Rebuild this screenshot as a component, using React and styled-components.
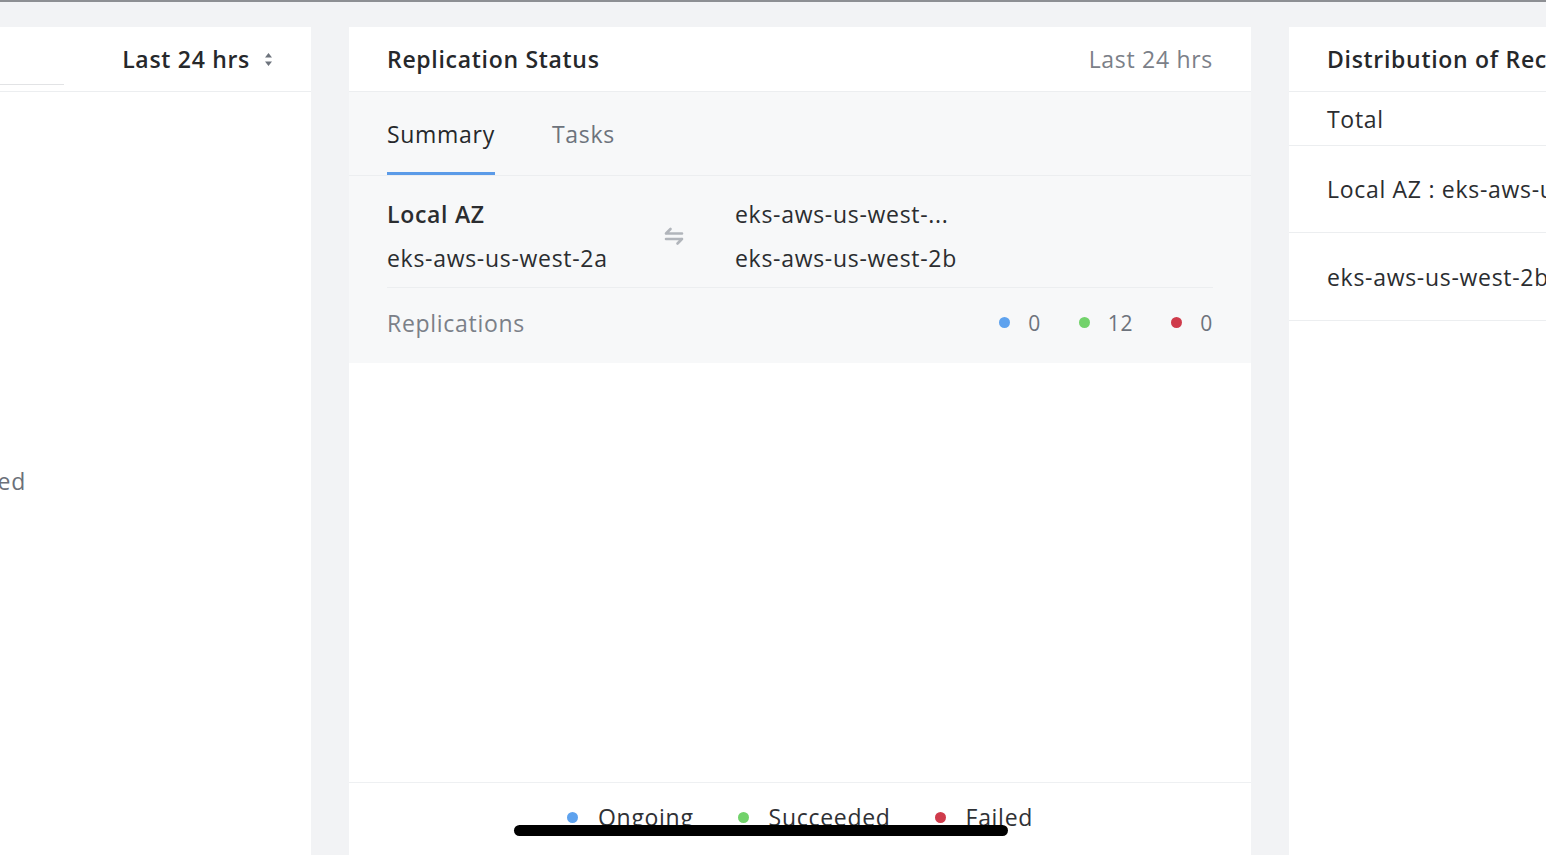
import React from "react";
import styled, { createGlobalStyle } from "styled-components";

const Global = createGlobalStyle`
  html, body {
    margin:0;
    padding:0;
    overflow:hidden;
    background:#f2f3f5;
    font-family:"Open Sans", "Liberation Sans", sans-serif;
    letter-spacing:0.7px;
    color:#2b2d30;
  }
`;

const Page = styled.div`
  width:1546px;
  height:855px;
  position:relative;
  border-top:2px solid #8d8f93;
  box-sizing:border-box;
  overflow:hidden;
`;

const Board = styled.div`
  display:flex;
  gap:38px;
  padding-top:25px;
  margin-left:-89px;
  height:100%;
  box-sizing:border-box;
`;

const Card = styled.section`
  flex:0 0 ${p => p.$w}px;
  background:#fff;
  display:flex;
  flex-direction:column;
  min-width:0;
  overflow:hidden;
`;

const CardHeader = styled.div`
  height:65px;
  flex:0 0 65px;
  display:flex;
  align-items:center;
  justify-content:space-between;
  padding:0 38px;
  border-bottom:1px solid #eceef0;
  box-sizing:border-box;
  white-space:nowrap;
`;

const SearchLine = styled.div`
  align-self:flex-end;
  width:153px;
  margin:0 0 6px -38px;
  border-bottom:1px solid #e2e3e5;
`;

const Title = styled.h2`
  margin:0;
  font-size:23px;
  font-weight:600;
  color:#26282b;
`;

const Range = styled.span`
  font-size:23px;
  color:${p => p.$muted ? "#7b8088" : "#26282b"};
  font-weight:${p => p.$muted ? 400 : 600};
  display:flex;
  align-items:center;
  gap:14px;
`;

const LeftBody = styled.div`
  flex:1;
`;

const LeftLabel = styled.div`
  padding:373px 0 0 0;
  margin-left:-7px;
  font-size:23px;
  color:#6b7079;
`;

const Panel = styled.div`
  background:#f7f8f9;
  padding:0 38px;
`;

const Tabs = styled.div`
  display:flex;
  gap:57px;
  height:83px;
  align-items:stretch;
  border-bottom:1px solid #eceef0;
  margin:0 -38px;
  padding:0 38px;
`;

const Tab = styled.div`
  display:flex;
  align-items:center;
  font-size:23px;
  font-weight:${p => p.$active ? 500 : 400};
  color:${p => p.$active ? "#26282b" : "#6d737c"};
  border-bottom:3px solid ${p => p.$active ? "#5b9be8" : "transparent"};
  padding-top:4px;
  box-sizing:border-box;
`;

const Route = styled.div`
  display:grid;
  grid-template-columns:262px 86px 1fr;
  height:112px;
  align-items:center;
  border-bottom:1px solid #eceef0;
  padding-top:8px;
  box-sizing:border-box;
`;

const ZoneCol = styled.div`
  display:flex;
  flex-direction:column;
  gap:12px;
  font-size:23px;
  white-space:nowrap;
`;

const ZoneName = styled.span`
  font-weight:${p => p.$strong ? 600 : 400};
  color:#2b2d30;
`;

const SwapIcon = styled.div`
  display:flex;
  align-items:center;
  justify-content:flex-start;
  padding-left:15px;
  color:#b1b5bb;
`;

const CountRow = styled.div`
  display:flex;
  align-items:center;
  justify-content:space-between;
  height:75px;
  padding-bottom:6px;
  box-sizing:border-box;
`;

const Muted = styled.span`
  font-size:23px;
  color:#7b8088;
`;

const Counts = styled.div`
  display:flex;
  gap:38px;
`;

const Count = styled.span`
  display:flex;
  align-items:center;
  gap:18px;
  font-size:21px;
  color:#6d737c;
`;

const Dot = styled.i`
  width:11px;
  height:11px;
  border-radius:50%;
  background:${p => p.$c};
  display:inline-block;
`;

const Spacer = styled.div`
  flex:1;
  border-bottom:1px solid #eef0f2;
`;

const Legend = styled.div`
  height:72px;
  flex:0 0 72px;
  display:flex;
  justify-content:center;
  align-items:center;
  gap:44px;
  padding-bottom:4px;
  box-sizing:border-box;
`;

const LegendItem = styled.span`
  display:flex;
  align-items:center;
  gap:20px;
  font-size:23px;
  color:#2f3135;
`;

const DistRow = styled.div`
  height:${p => p.$h}px;
  flex:0 0 ${p => p.$h}px;
  display:flex;
  align-items:center;
  padding:0 38px;
  border-bottom:1px solid #eceef0;
  font-size:23px;
  white-space:nowrap;
  color:#2b2d30;
  box-sizing:border-box;
`;

const HomeBar = styled.div`
  position:absolute;
  left:514px;
  top:823px;
  width:494px;
  height:11px;
  border-radius:6px;
  background:#000;
`;

const colors = { ongoing: "#5ea2ee", ok: "#72d26b", fail: "#cf3b4b" };

function Sort() {
  return (
    <svg width="9" height="15" viewBox="0 0 9 15">
      <path d="M4.5 1 L8 5.5 H1 Z M4.5 14 L8 9.5 H1 Z" fill="#6d737c" />
    </svg>
  );
}

function Swap() {
  return (
    <svg width="20" height="20" viewBox="0 0 20 20" fill="none" stroke="currentColor" strokeWidth="2.6" strokeLinecap="round" strokeLinejoin="round">
      <path d="M2 7.5 H18 M2 7.5 L6.5 3" />
      <path d="M2 13 H18 M18 13 L13.5 17.5" />
    </svg>
  );
}

export default function App() {
  return (
    <>
      <Global />
      <Page>
        <Board>
          <Card $w={400}>
            <CardHeader>
              <SearchLine />
              <Range>Last 24 hrs <Sort /></Range>
            </CardHeader>
            <LeftBody>
              <LeftLabel>Succeeded</LeftLabel>
            </LeftBody>
          </Card>

          <Card $w={902}>
            <CardHeader>
              <Title>Replication Status</Title>
              <Range $muted>Last 24 hrs</Range>
            </CardHeader>
            <Panel>
              <Tabs>
                <Tab $active>Summary</Tab>
                <Tab>Tasks</Tab>
              </Tabs>
              <Route>
                <ZoneCol>
                  <ZoneName $strong>Local AZ</ZoneName>
                  <ZoneName>eks-aws-us-west-2a</ZoneName>
                </ZoneCol>
                <SwapIcon><Swap /></SwapIcon>
                <ZoneCol>
                  <ZoneName>eks-aws-us-west-...</ZoneName>
                  <ZoneName>eks-aws-us-west-2b</ZoneName>
                </ZoneCol>
              </Route>
              <CountRow>
                <Muted>Replications</Muted>
                <Counts>
                  <Count><Dot $c={colors.ongoing} />0</Count>
                  <Count><Dot $c={colors.ok} />12</Count>
                  <Count><Dot $c={colors.fail} />0</Count>
                </Counts>
              </CountRow>
            </Panel>
            <Spacer />
            <Legend>
              <LegendItem><Dot $c={colors.ongoing} />Ongoing</LegendItem>
              <LegendItem><Dot $c={colors.ok} />Succeeded</LegendItem>
              <LegendItem><Dot $c={colors.fail} />Failed</LegendItem>
            </Legend>
          </Card>

          <Card $w={400}>
            <CardHeader>
              <Title>Distribution of Records</Title>
            </CardHeader>
            <DistRow $h={54}>Total</DistRow>
            <DistRow $h={87}>Local AZ : eks-aws-us-west-2a</DistRow>
            <DistRow $h={88}>eks-aws-us-west-2b</DistRow>
          </Card>
        </Board>
        <HomeBar />
      </Page>
    </>
  );
}
